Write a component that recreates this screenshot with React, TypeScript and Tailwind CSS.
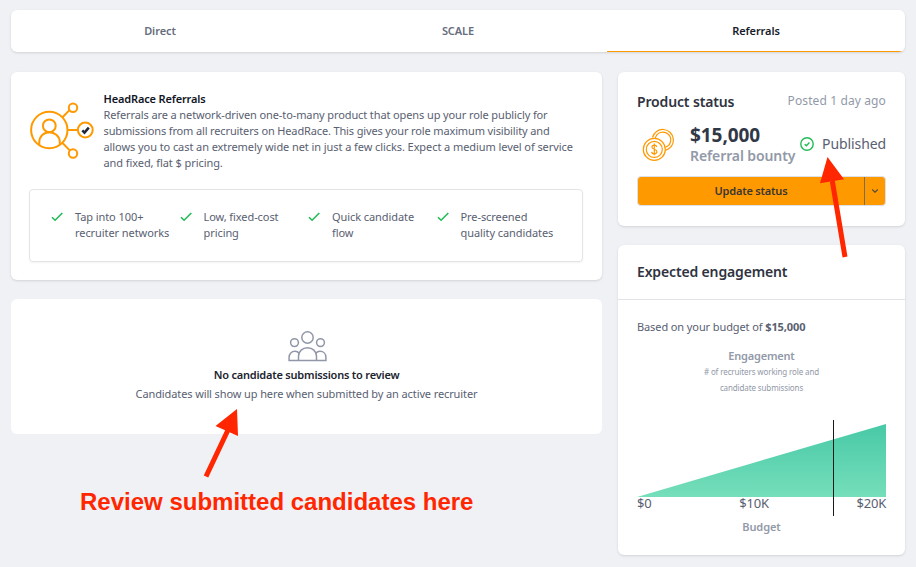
import { ChevronDown } from "lucide-react";
import clsx from "clsx";

const tabs = [
  { name: "Direct", active: false },
  { name: "SCALE", active: false },
  { name: "Referrals", active: true },
];

const perks = [
  ["Tap into 100+", "recruiter networks"],
  ["Low, fixed-cost", "pricing"],
  ["Quick candidate", "flow"],
  ["Pre-screened", "quality candidates"],
];

function NetworkIcon() {
  return (
    <svg width="66" height="58" viewBox="0 0 66 58" fill="none" stroke="#ff9900" strokeWidth="2">
      <circle cx="19.3" cy="28" r="18.2" />
      <circle cx="19.3" cy="23.8" r="6.4" />
      <path d="M9.3 43v-3c0-5.600 4.500-9.800 10-9.800s10.500 4.200 10.500 9.800v3" />
      <path d="M32.500 15.200l7.500-7.600M37.500 28h10M32.500 41l7.500 7.600" />
      <circle cx="43" cy="5.700" r="4.200" />
      <circle cx="43" cy="51.500" r="4.200" />
      <circle cx="55.300" cy="28" r="7.400" />
      <path d="M52.300 28.300l2.200 2.300 4.300-5" stroke="#1f2533" strokeWidth="2.500" />
    </svg>
  );
}

function CoinsIcon() {
  return (
    <svg width="34" height="34" viewBox="0 0 34 34" fill="none" stroke="#ff9900" strokeWidth="1.200">
      <path d="M10.500 9.500A10.600 10.600 0 1 1 23.500 22.300" />
      <path d="M13.300 10.400A7.800 7.800 0 1 1 23.500 19.300" />
      <circle cx="12.300" cy="21.400" r="11" />
      <circle cx="12.300" cy="21.400" r="8" />
      <path d="M14.800 18.800c-.3-1.200-1.200-1.700-2.500-1.700-1.400 0-2.400.8-2.400 2s.9 1.700 2.400 2.200c1.600.5 2.600 1 2.600 2.300s-1 2.200-2.600 2.200c-1.500 0-2.500-.7-2.700-2M12.300 15.500v11.700" />
    </svg>
  );
}

function PeopleIcon() {
  return (
    <svg width="39" height="31" viewBox="0 0 39 31" fill="none" stroke="#9297a8" strokeWidth="1.500">
      <circle cx="19.500" cy="6.500" r="5.700" />
      <circle cx="6.500" cy="11.600" r="3.900" />
      <circle cx="32.500" cy="11.600" r="3.900" />
      <path d="M10.500 29.600v-4.300c0-5.100 4-8.600 9-8.600s9 3.500 9 8.600v4.300" />
      <path d="M11.200 22.200c-1-1.200-2.500-1.900-4.200-1.900-3.400 0-5.900 2.500-5.900 5.900v3.400h36.800v-3.400c0-3.400-2.500-5.900-5.900-5.900-1.700 0-3.200.7-4.200 1.900" />
    </svg>
  );
}

function PerkCheck() {
  return (
    <svg className="mt-[3px]" width="13" height="10" viewBox="0 0 13 10" fill="none" stroke="#22bb55" strokeWidth="1.600">
      <path d="M1 5.200l3.100 3L11.300 1" />
    </svg>
  );
}

function PublishedIcon() {
  return (
    <svg width="14" height="14" viewBox="0 0 14 14" fill="none" stroke="#22bb55" strokeWidth="1.400">
      <circle cx="7" cy="7" r="6.200" />
      <path d="M4.700 7.200l1.700 1.600 3-3.300" />
    </svg>
  );
}

function EngagementChart() {
  return (
    <svg className="block" width="249" height="96" viewBox="0 0 249 96">
      <defs>
        <linearGradient id="engagement" x1="0" y1="0" x2="0" y2="1">
          <stop offset="0" stopColor="#48c9a7" />
          <stop offset="1" stopColor="#76deba" />
        </linearGradient>
      </defs>
      <path d="M0 77L249 4v73z" fill="url(#engagement)" />
      <path d="M196.500 0v96" stroke="#1a1a1a" />
    </svg>
  );
}

function Annotations() {
  return (
    <>
      <svg className="absolute inset-0 pointer-events-none" width="916" height="567" fill="#ff2600" stroke="#ff2600">
        <path d="M206 476.500L228 430M845 257L832.300 181" strokeWidth="5" />
        <path d="M237 409l-21.500 17 22.500 10zM827.500 157l-7.500 26.300 24-4z" stroke="none" />
      </svg>
      <p className="absolute left-[80px] top-[487px] whitespace-nowrap font-['Liberation_Sans',sans-serif] text-2xl leading-[30px] font-bold tracking-normal text-[#ff2600]">
        Review submitted candidates here
      </p>
    </>
  );
}

export default function App() {
  return (
    <div className="relative h-[567px] w-[916px] overflow-hidden bg-[#f0f1f5] px-[11px] pt-[10px] font-['Noto_Sans',sans-serif] text-[11px] leading-4 tracking-[-0.075px] whitespace-nowrap text-[#596071]">
      <nav className="grid h-[42px] grid-cols-3 overflow-hidden rounded-md bg-white shadow-sm">
        {tabs.map((tab) => (
          <button
            key={tab.name}
            className={clsx(
              "font-semibold",
              tab.active ? "border-b border-[#ff9900] text-[#181c2a]" : "text-[#666d7d]"
            )}
          >
            {tab.name}
          </button>
        ))}
      </nav>

      <div className="mt-5 flex gap-4">
        <main className="flex w-[591px] flex-col gap-[19px]">
          <section className="h-[208px] rounded-md bg-white px-[18px] pt-[19px] shadow-sm">
            <div className="flex">
              <div className="w-[74.500px] pt-[11px] pl-px">
                <NetworkIcon />
              </div>
              <div>
                <h2 className="font-semibold tracking-[-0.150px] text-[#111525]">HeadRace Referrals</h2>
                <p>
                  <span className="tracking-[-0.110px]">
                    Referrals are a network-driven one-to-many product that opens up your role publicly for
                  </span>
                  <br />
                  <span className="tracking-[-0.140px]">
                    submissions from all recruiters on HeadRace. This gives your role maximum visibility and
                  </span>
                  <br />
                  allows you to cast an extremely wide net in just a few clicks. Expect a medium level of service
                  <br />
                  and fixed, flat $ pricing.
                </p>
              </div>
            </div>
            <ul className="mt-[18px] grid h-[73px] w-[554px] grid-cols-[128.500px_128.500px_128.500px_1fr] rounded border border-[#e2e4e8] pt-[19px] pl-[21px] shadow-xs">
              {perks.map(([first, second]) => (
                <li key={first} className="flex gap-[11px]">
                  <PerkCheck />
                  <span>
                    {first}
                    <br />
                    {second}
                  </span>
                </li>
              ))}
            </ul>
          </section>

          <section className="flex h-[135px] flex-col items-center rounded-md bg-white pt-8">
            <div className="pl-0.5">
              <PeopleIcon />
            </div>
            <h2 className="mt-[5px] font-semibold tracking-[-0.210px] text-[#20242f]">No candidate submissions to review</h2>
            <p className="mt-[3px] tracking-[-0.110px]">Candidates will show up here when submitted by an active recruiter</p>
          </section>
        </main>

        <aside className="flex w-[287px] flex-col gap-[19px]">
          <section className="h-[154px] rounded-md bg-white px-[19px] pt-5 shadow-sm">
            <div className="flex justify-between">
              <h2 className="text-sm leading-5 font-semibold tracking-[-0.150px] text-[#2f333f]">Product status</h2>
              <span className="text-[12px] leading-[17px] tracking-[0.120px] text-[#9299a8]">Posted 1 day ago</span>
            </div>
            <div className="mt-[11px] flex h-[46px]">
              <div className="w-[53px] pt-[5px] pl-[5px]">
                <CoinsIcon />
              </div>
              <div>
                <p className="text-[19px] leading-6 font-bold text-[#303847]">$15,000</p>
                <p className="text-sm leading-[18px] font-semibold tracking-[-0.100px] text-[#9299a8]">Referral bounty</p>
              </div>
              <div className="ml-auto flex h-[42px] items-center gap-2 text-sm tracking-[-0.100px]">
                <PublishedIcon />
                <span>Published</span>
              </div>
            </div>
            <div className="mt-[7px] flex h-[30px] w-[249px] overflow-hidden rounded border border-[#dce0e8] bg-[#ff9900]">
              <button className="w-[227px] border-r border-[#7d6d50] text-[11px] font-semibold tracking-[-0.200px] text-[#3a3633]">
                Update status
              </button>
              <button className="flex flex-1 items-center justify-center">
                <ChevronDown className="h-2.5 w-2.5 text-[#59503f]" strokeWidth={2.8} />
              </button>
            </div>
          </section>

          <section className="h-[310px] rounded-md bg-white shadow-sm">
            <h2 className="h-[55px] border-b border-[#e1e3e7] px-[19px] pt-[17px] text-sm leading-5 font-semibold tracking-[-0.150px] text-[#2f333f]">
              Expected engagement
            </h2>
            <div className="px-[19px] pt-[19px]">
              <p className="tracking-[-0.100px]">
                Based on your budget of <b>$15,000</b>
              </p>
              <div className="mt-[13px] text-center text-[#9299a8]">
                <h3 className="font-semibold tracking-[-0.200px]">Engagement</h3>
                <p className="text-[8px] tracking-[-0.120px]">
                  # of recruiters working role and
                  <br />
                  candidate submissions
                </p>
              </div>
              <div className="mt-6">
                <EngagementChart />
              </div>
              <div className="-mt-[21px] flex justify-between text-[13px] tracking-[-0.200px]">
                <span>$0</span>
                <span>$10K</span>
                <span>$20K</span>
              </div>
              <p className="mt-2 text-center font-semibold text-[#9299a8]">Budget</p>
            </div>
          </section>
        </aside>
      </div>

      <Annotations />
    </div>
  );
}
